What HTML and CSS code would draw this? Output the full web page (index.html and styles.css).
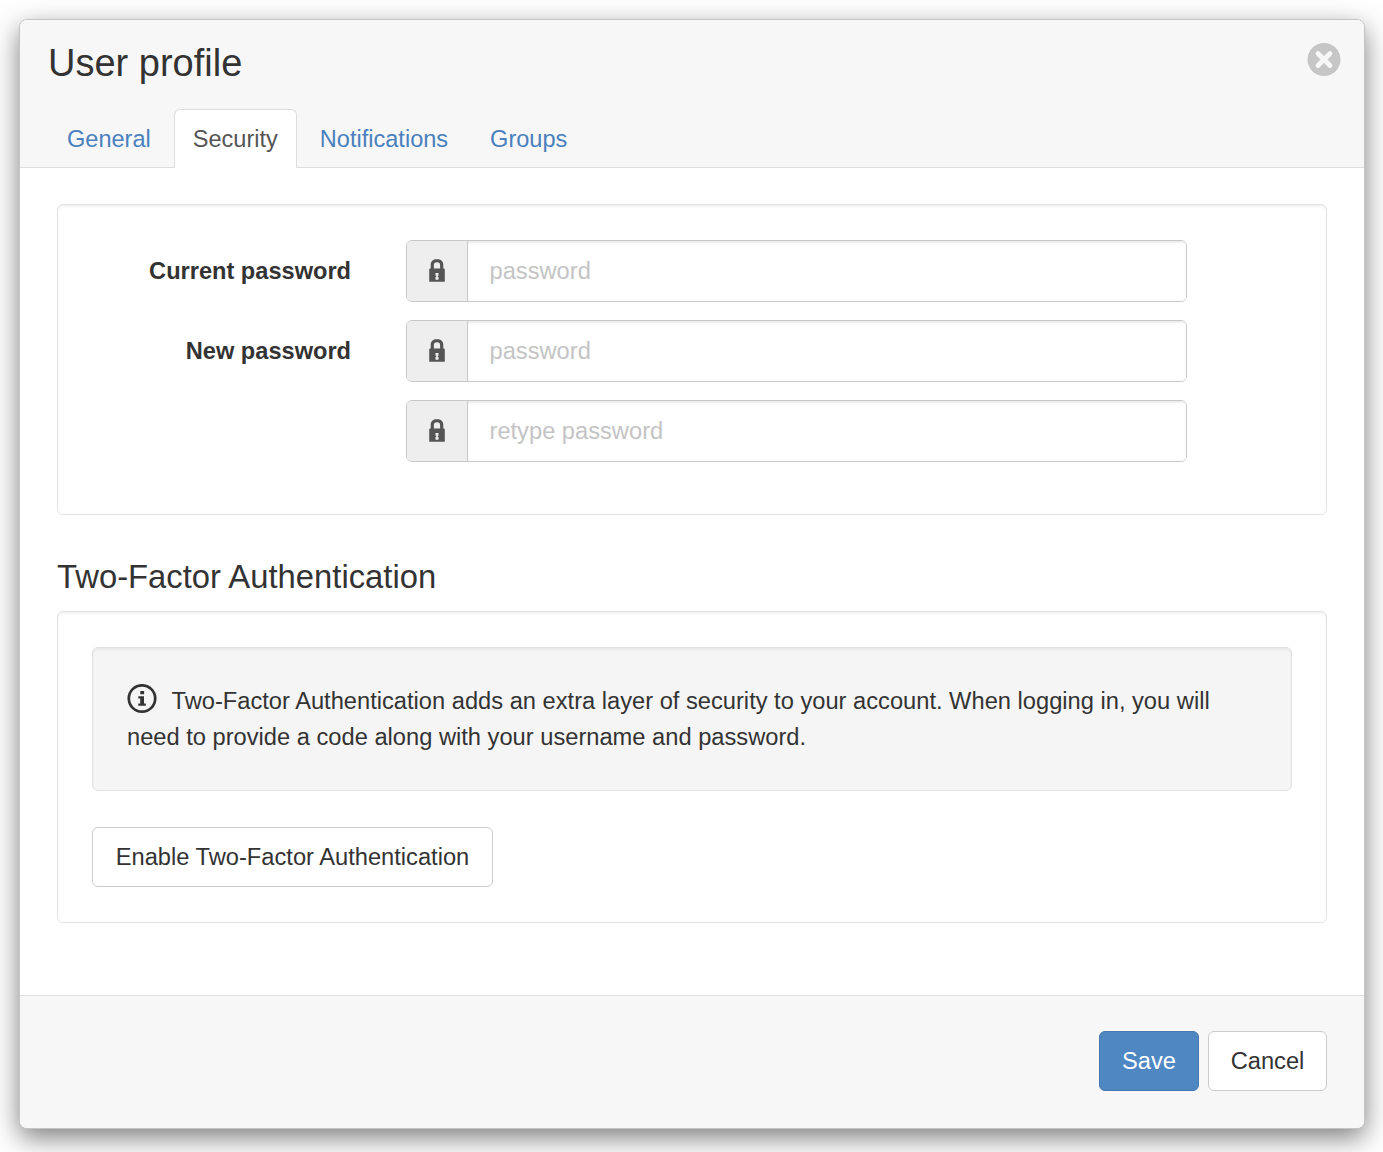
FILE: index.html
```html
<!DOCTYPE html>
<html lang="en">
<head>
<meta charset="utf-8">
<title>User profile</title>
<link rel="stylesheet" href="styles.css">
</head>
<body>
<svg class="sprite" aria-hidden="true">
  <symbol id="lock" viewBox="0 0 16 24">
    <path fill-rule="evenodd" d="M1.700 9.500V6C1.700 2.300 4 .3 8 .3s6.300 2 6.300 5.700v3.500h.6q.9 0 .9.900v11.500q0 .9-.9.900H1.100q-.9 0-.9-.9V10.400q0-.9.900-.9zM4.900 9.500h6.200V6C11.100 4.100 10.200 3.300 8 3.300S4.900 4.100 4.900 6zM6.500 14v2.700h.7v1.300h-.7v2.800h3v-2.800h-.7v-1.300h.7V14z"/>
  </symbol>
</svg>
<div class="modal">
  <header class="modal-header">
    <div class="title-row">
      <h1 class="title">User profile</h1>
      <button class="close" type="button" aria-label="Close">
        <svg width="34" height="34" viewBox="0 0 34 34"><circle cx="17" cy="17.500" r="16.500" fill="#c6c6c6"/><path d="M11 11.500l12 12M23 11.500l-12 12" stroke="#f7f7f7" stroke-width="4.800" stroke-linecap="round"/></svg>
      </button>
    </div>
    <nav class="tabs">
      <a class="tab">General</a>
      <a class="tab active">Security</a>
      <a class="tab">Notifications</a>
      <a class="tab">Groups</a>
    </nav>
  </header>
  <main class="modal-body">
    <form class="panel passwords">
      <div class="row">
        <label class="label">Current password</label>
        <div class="group"><span class="addon"><svg class="lock"><use href="#lock"/></svg></span><input class="input" type="password" placeholder="password"></div>
      </div>
      <div class="row">
        <label class="label">New password</label>
        <div class="group"><span class="addon"><svg class="lock"><use href="#lock"/></svg></span><input class="input" type="password" placeholder="password"></div>
      </div>
      <div class="row">
        <span class="label"></span>
        <div class="group"><span class="addon"><svg class="lock"><use href="#lock"/></svg></span><input class="input" type="password" placeholder="retype password"></div>
      </div>
    </form>
    <h2 class="subtitle">Two-Factor Authentication</h2>
    <section class="panel two-factor">
      <p class="info"><svg class="info-icon" viewBox="0 0 30 30"><circle cx="15" cy="14.500" r="13.200" fill="none" stroke="#333" stroke-width="2.700"/><path fill="#333" d="M13.300 7h3.800v3.200h-3.800zM11.300 12.300H17v7.200h1.800v2.300h-7.500v-2.300h1.900v-4.900h-1.900z"/></svg>Two-Factor Authentication adds an extra layer of security to your account. When logging in, you will need to provide a code along with your username and password.</p>
      <button class="btn enable" type="button">Enable Two-Factor Authentication</button>
    </section>
  </main>
  <footer class="modal-footer">
    <button class="btn primary" type="button">Save</button>
    <button class="btn cancel" type="button">Cancel</button>
  </footer>
</div>
</body>
</html>
```
FILE: styles.css
```css
* { box-sizing: border-box; }
body {
  margin: 0;
  height: 1152px;
  padding: 19px 18px 23px 19px;
  overflow: hidden;
  background: #fff;
  color: #333;
  font: 23.680px/36px "Liberation Sans", Arial, sans-serif;
}
.sprite { position: absolute; width: 0; height: 0; }
.modal {
  display: flex;
  flex-direction: column;
  height: 1110px;
  background: #fff;
  border: 1px solid #c4c4c4;
  border-radius: 8px;
  box-shadow: 0 9px 27px rgba(0, 0, 0, .5);
}
.modal-header {
  height: 148px;
  display: flex;
  flex-direction: column;
  justify-content: space-between;
  background: #f7f7f7;
  border-bottom: 1px solid #ddd;
  border-radius: 7px 7px 0 0;
}
.title-row {
  display: flex;
  justify-content: space-between;
  align-items: flex-start;
  padding: 22px 23px 0 28px;
}
.title { margin: 0; font-size: 38px; line-height: 42px; font-weight: 400; }
.close { padding: 0; border: 0; background: none; line-height: 0; }
.tabs { display: flex; gap: 4px; padding-left: 28px; margin-bottom: -1px; font-size: 23.550px; }
.tab {
  height: 59px;
  padding: 11px 18px;
  border: 1px solid transparent;
  border-bottom: 0;
  border-radius: 6px 6px 0 0;
  color: #4a80bd;
}
.tab.active { color: #555; background: #fff; border-color: #ddd; }
.modal-body { flex: 1; padding: 36px 37px 0; }
.panel {
  border: 1px solid #e1e1e1;
  border-radius: 6px;
  box-shadow: inset 0 2px 2px rgba(0, 0, 0, .05);
}
.passwords {
  height: 311px;
  padding-top: 35px;
  display: flex;
  flex-direction: column;
  gap: 18px;
}
.row { display: flex; align-items: center; }
.label { width: 293px; margin-right: 55px; text-align: right; font-size: 23.600px; font-weight: 700; }
.group {
  display: flex;
  width: 781px;
  height: 62px;
  border: 1px solid #c8c8c8;
  border-radius: 6px;
  overflow: hidden;
}
.addon {
  display: flex;
  align-items: center;
  justify-content: center;
  width: 61px;
  background: #eee;
  border-right: 1px solid #c8c8c8;
}
.lock { width: 16px; height: 24px; fill: #555; }
.input {
  flex: 1;
  min-width: 0;
  border: 0;
  padding: 0 21.500px;
  background: #fff;
  font: inherit;
  box-shadow: inset 0 2px 2px rgba(0, 0, 0, .075);
}
.input::placeholder { color: #c4c4c4; opacity: 1; }
.subtitle { margin: 42px 0 15px; font-size: 32.800px; line-height: 39px; font-weight: 400; }
.two-factor { height: 312px; padding: 35px 34px; }
.info {
  height: 144px;
  margin: 0 0 36px;
  padding: 35px 34px;
  background: #f5f5f5;
  border: 1px solid #e1e1e1;
  border-radius: 6px;
  box-shadow: inset 0 2px 2px rgba(0, 0, 0, .05);
}
.info-icon { width: 30px; height: 30px; margin-right: 14.500px; vertical-align: -4.500px; }
.btn {
  height: 60px;
  padding: 0;
  border: 1px solid #ccc;
  border-radius: 6px;
  background: #fff;
  color: #333;
  font: inherit;
}
.btn.enable { width: 401px; }
.btn.cancel { width: 119px; }
.btn.primary { width: 100px; background: #4e87c2; border-color: #4479b0; color: #fff; }
.modal-footer {
  display: flex;
  justify-content: flex-end;
  align-items: flex-start;
  gap: 9px;
  height: 133px;
  padding: 35px 37px;
  background: #f7f7f7;
  border-top: 1px solid #e1e1e1;
  border-radius: 0 0 7px 7px;
}
```
